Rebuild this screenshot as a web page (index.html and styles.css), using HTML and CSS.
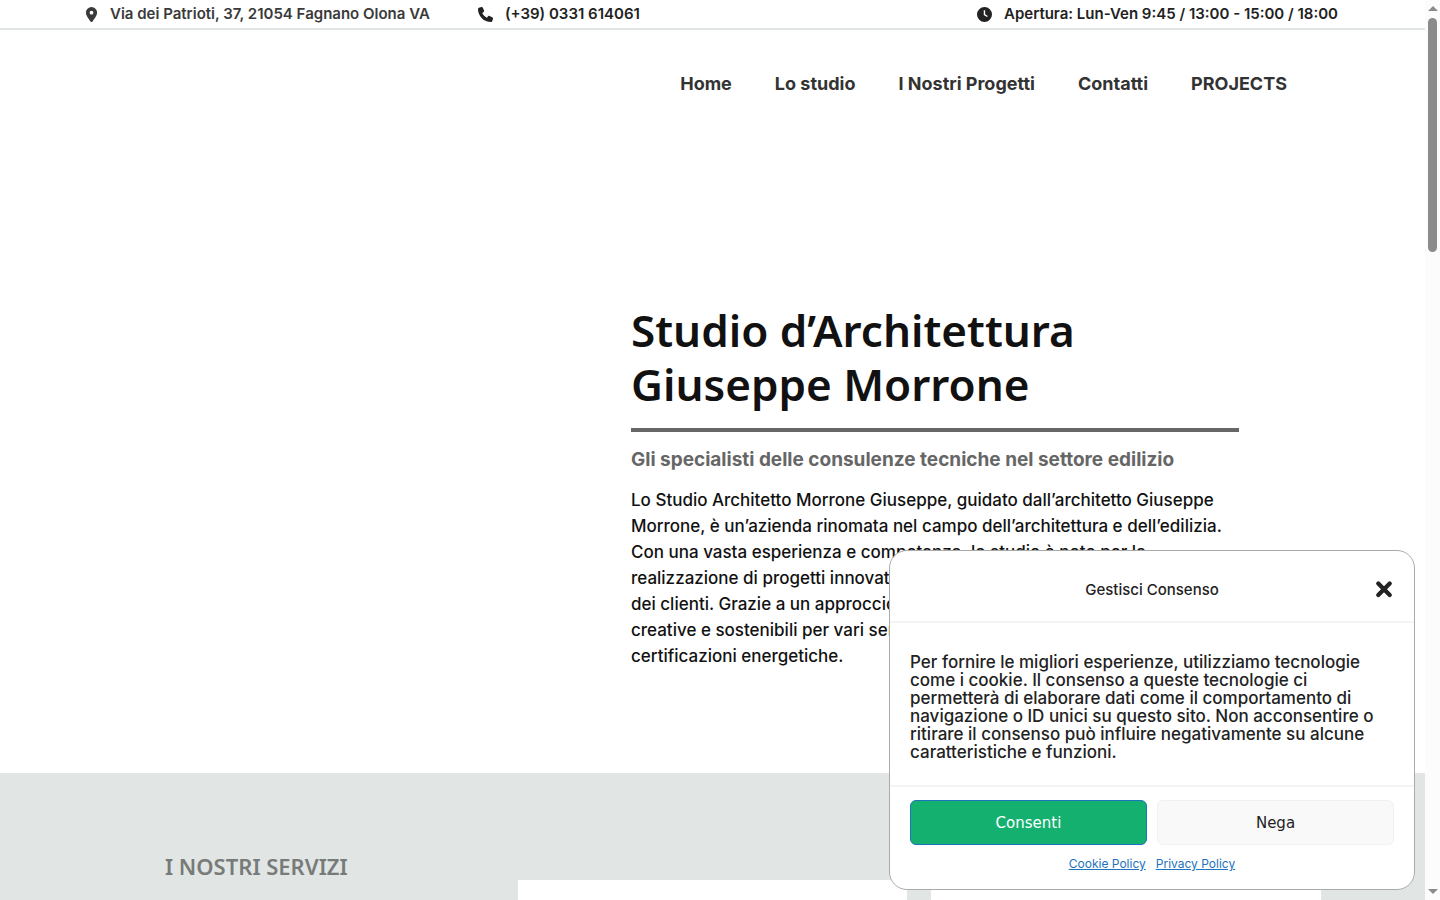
FILE: index.html
```html
<!DOCTYPE html>
<html lang="it">
<head>
  <meta charset="UTF-8" />
  <meta name="viewport" content="width=device-width, initial-scale=1.0"/>
  <title>Studio d’Architettura Giuseppe Morrone</title>
  <link rel="stylesheet" href="styles.css">
</head>
<body>

  <div class="page">
    <div class="top-bar">
      <span class="top-item address">
        <svg class="icon" viewBox="0 0 12 16"><path fill-rule="evenodd" d="M6 0a6 6 0 0 0-6 6c0 2.700 3.600 7.500 5.200 9.600a1 1 0 0 0 1.600 0C8.400 13.500 12 8.700 12 6a6 6 0 0 0-6-6zm0 4a2 2 0 1 1 0 4 2 2 0 0 1 0-4z"/></svg>
        Via dei Patrioti, 37, 21054 Fagnano Olona VA
      </span>
      <span class="top-item">
        <svg class="icon" viewBox="0 0 512 512"><path d="M165 25c-8-19-29-29-48-23l-88 24C12 30 0 46 0 64c0 247 201 448 448 448 18 0 34-12 39-29l24-88c5-20-5-41-24-49l-96-40c-16-7-35-2-46 12l-41 49C234 334 178 278 145 207l49-40c14-11 19-30 12-46L165 25z"/></svg>
        (+39) 0331 614061
      </span>
      <span class="top-item hours">
        <svg class="icon" viewBox="0 0 16 16"><path fill-rule="evenodd" d="M8 0a8 8 0 1 1 0 16A8 8 0 0 1 8 0zm-.8 3.500v4.900l3.500 2.300.8-1.200-2.800-1.900V3.500z"/></svg>
        Apertura: Lun-Ven 9:45 / 13:00 - 15:00 / 18:00
      </span>
    </div>

    <header class="header">
      <nav class="main-menu">
        <a href="#">Home</a>
        <a href="#">Lo studio</a>
        <a href="#">I Nostri Progetti</a>
        <a href="#">Contatti</a>
        <a href="#">PROJECTS</a>
      </nav>
    </header>

    <section class="hero">
      <div class="hero-text">
        <h1>Studio d’Architettura<br>Giuseppe Morrone</h1>
        <h2>Gli specialisti delle consulenze tecniche nel settore edilizio</h2>
        <p>Lo Studio Architetto Morrone Giuseppe, guidato dall’architetto Giuseppe Morrone, è un’azienda rinomata nel campo dell’architettura e dell’edilizia.<br>Con una vasta esperienza e competenza, lo studio è noto per la<br>realizzazione di progetti innovativi, pensati per le esigenze<br>dei clienti. Grazie a un approccio attento, offre soluzioni<br>creative e sostenibili per vari servizi, tra cui pratiche e<br>certificazioni energetiche.</p>
      </div>
    </section>

    <section class="services">
      <div class="services-grid">
        <h2 class="services-title">I NOSTRI SERVIZI</h2>
        <div class="service-card"></div>
        <div class="service-card"></div>
      </div>
    </section>
  </div>

  <div class="scrollbar">
    <span class="arrow-up"></span>
    <span class="thumb"></span>
    <span class="arrow-down"></span>
  </div>

  <!-- Cookie banner -->
  <div class="cookie-banner" role="dialog" aria-labelledby="cookie-title">
    <div class="cookie-header">
      <div class="cookie-title" id="cookie-title">Gestisci Consenso</div>
      <button class="cookie-close" aria-label="Chiudi">
        <svg viewBox="0 0 14 14"><path d="M3 2.500l8 8M11 2.500l-8 8"/></svg>
      </button>
    </div>
    <p class="cookie-message">Per fornire le migliori esperienze, utilizziamo tecnologie come i cookie. Il consenso a queste tecnologie ci<br>permetterà di elaborare dati come il comportamento di navigazione o ID unici su questo sito. Non acconsentire o ritirare il consenso può influire negativamente su alcune caratteristiche e funzioni.</p>
    <div class="cookie-footer">
      <div class="cookie-buttons">
        <button class="btn btn-accept">Consenti</button>
        <button class="btn btn-deny">Nega</button>
      </div>
      <div class="cookie-links">
        <a href="#">Cookie Policy</a>
        <a href="#">Privacy Policy</a>
      </div>
    </div>
  </div>

</body>
</html>
```
FILE: styles.css
```css
* {
  box-sizing: border-box;
  margin: 0;
  padding: 0;
}

body {
  font-family: Inter, 'Liberation Sans', sans-serif;
  background-color: #fff;
  color: #111;
  display: flex;
  height: 100vh;
  overflow: hidden;
}

.page {
  flex: 1;
  display: flex;
  flex-direction: column;
  min-width: 0;
}

/* TOP BAR */
.top-bar {
  display: flex;
  align-items: center;
  gap: 48px;
  padding: 0 87px 0 85px;
  border-bottom: 2px solid #e1e6e4;
  font-size: 15px;
  font-weight: 600;
  line-height: 28px;
  color: #222;
}

.top-item {
  display: flex;
  align-items: center;
  gap: 12px;
  white-space: nowrap;
}

.address {
  color: #3a3a3a;
}

.address .icon {
  width: 13px;
}

.hours {
  margin-left: auto;
}

.icon {
  width: 15px;
  height: 15px;
  fill: currentColor;
}

/* MENU */
.header {
  padding: 40px 138px 40px 0;
}

.main-menu {
  display: flex;
  justify-content: flex-end;
  gap: 43px;
}

.main-menu a {
  font-size: 18px;
  font-weight: 700;
  line-height: 28px;
  color: #333;
  text-decoration: none;
}

/* HERO */
.hero {
  width: 100%;
  max-width: 1217px;
  margin: 0 auto;
  padding: 165px 82px 104px;
  display: flex;
  justify-content: flex-end;
}

.hero-text {
  flex: 0 1 608px;
}

.hero h1 {
  font-family: 'Noto Sans', sans-serif;
  font-size: 44px;
  font-weight: 600;
  line-height: 54px;
  padding-bottom: 17px;
  border-bottom: 4px solid #666;
}

.hero h2 {
  font-size: 19px;
  font-weight: 700;
  line-height: 26px;
  color: #666;
  margin: 15px 0 14px;
}

.hero p {
  font-size: 17px;
  font-weight: 500;
  line-height: 26px;
}

/* SERVICES */
.services {
  flex: 1;
  background-color: #e1e6e4;
  padding-top: 107px;
}

.services-grid {
  max-width: 1217px;
  height: 100%;
  margin: 0 auto;
  display: grid;
  grid-template-columns: repeat(3, 1fr);
  gap: 24px;
}

.services-title {
  font-family: 'Noto Sans', sans-serif;
  font-size: 22px;
  font-weight: 600;
  line-height: 28px;
  color: #777b79;
  padding-left: 61px;
  margin-top: -28px;
}

.service-card {
  background-color: #fff;
}

/* SCROLLBAR */
.scrollbar {
  width: 15px;
  background-color: #fcfcfc;
  display: flex;
  flex-direction: column;
  align-items: center;
  padding: 6px 0;
}

.thumb {
  width: 9px;
  height: 234px;
  margin-top: 7px;
  border-radius: 5px;
  background-color: #8b8b8b;
}

.arrow-up,
.arrow-down {
  border: 5px solid transparent;
}

.arrow-up {
  border-top: none;
  border-bottom-color: #8b8b8b;
}

.arrow-down {
  margin-top: auto;
  border-bottom: none;
  border-top-color: #8b8b8b;
}

/* COOKIE BANNER */
.cookie-banner {
  position: fixed;
  right: 25px;
  bottom: 10px;
  width: 526px;
  background-color: #fff;
  border: 1px solid #aaa;
  border-radius: 18px;
  color: #222;
}

.cookie-header {
  display: grid;
  grid-template-columns: 1fr auto 1fr;
  align-items: center;
  padding: 24px 20px 17px;
  border-bottom: 2px solid #f4f4f4;
}

.cookie-title {
  grid-column: 2;
  font-size: 15px;
  font-weight: 500;
  line-height: 29px;
}

.cookie-close {
  justify-self: end;
  width: 20px;
  height: 20px;
  background: none;
  border: none;
  cursor: pointer;
}

.cookie-close svg {
  display: block;
  width: 20px;
  fill: none;
  stroke: #222;
  stroke-width: 3;
  stroke-linecap: round;
}

.cookie-message {
  padding: 30px 20px 24px;
  font-size: 17px;
  font-weight: 500;
  line-height: 18px;
  border-bottom: 2px solid #f4f4f4;
}

.cookie-footer {
  padding: 13px 20px 16px;
}

.cookie-buttons {
  display: flex;
  gap: 10px;
}

.btn {
  flex: 1;
  height: 45px;
  border: 1px solid #f1f1f1;
  border-radius: 6px;
  font-family: 'DejaVu Sans', sans-serif;
  font-size: 15px;
  cursor: pointer;
}

.btn-accept {
  background-color: #14b070;
  border-color: #1e73be;
  color: #fff;
}

.btn-deny {
  background-color: #f9f9f9;
  color: #222;
}

.cookie-links {
  display: flex;
  justify-content: center;
  gap: 10px;
  margin-top: 10px;
  font-size: 12px;
  line-height: 18px;
}

.cookie-links a {
  color: #1e73be;
}
```
